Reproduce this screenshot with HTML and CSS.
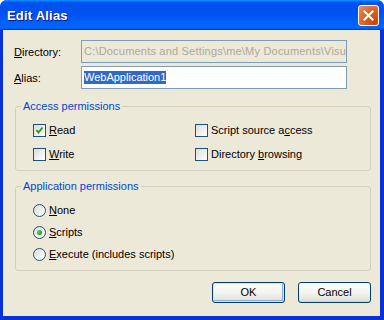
FILE: index.html
```html
<!DOCTYPE html>
<html lang="en">
<head>
  <meta charset="UTF-8">
  <title>Edit Alias</title>
  <link rel="stylesheet" href="styles.css">
</head>
<body>
  <div class="window">
    <div class="titlebar">
      <span class="title">Edit Alias</span>
      <div class="close" title="Close">
        <svg width="11" height="11" viewBox="0 0 11 11">
          <path d="M1.5 1.5 L9.5 9.5 M9.5 1.5 L1.5 9.5" stroke="#ffffff" stroke-width="2" stroke-linecap="square"/>
        </svg>
      </div>
    </div>

    <div class="client">
      <div class="field">
        <label><u>D</u>irectory:</label>
        <div class="textbox readonly">C:\Documents and Settings\me\My Documents\Visu</div>
      </div>
      <div class="field">
        <label><u>A</u>lias:</label>
        <div class="textbox"><span class="selected">WebApplication1</span></div>
      </div>

      <fieldset class="group">
        <legend>Access permissions</legend>
        <div class="checks">
          <div class="option"><span class="checkbox checked"><svg width="11" height="11" viewBox="0 0 11 11"><path d="M2.5 5 L4.5 7.5 L8.5 2.5" fill="none" stroke="#21a121" stroke-width="2"/></svg></span><span><u>R</u>ead</span></div>
          <div class="option"><span class="checkbox"></span><span>Script source a<u>c</u>cess</span></div>
          <div class="option"><span class="checkbox"></span><span><u>W</u>rite</span></div>
          <div class="option"><span class="checkbox"></span><span>Directory <u>b</u>rowsing</span></div>
        </div>
      </fieldset>

      <fieldset class="group app">
        <legend>Application permissions</legend>
        <div class="radios">
          <div class="option"><span class="radio"></span><span><u>N</u>one</span></div>
          <div class="option"><span class="radio on"></span><span><u>S</u>cripts</span></div>
          <div class="option"><span class="radio"></span><span><u>E</u>xecute (includes scripts)</span></div>
        </div>
      </fieldset>

      <div class="buttons">
        <div class="btn default">OK</div>
        <div class="btn">Cancel</div>
      </div>
    </div>
  </div>
</body>
</html>
```

FILE: styles.css
```css
body {
  margin: 0;
  padding: 0;
  font-family: "Liberation Sans", Arial, sans-serif;
  font-size: 11px;
  color: #000000;
}
.window {
  width: 384px;
  height: 320px;
  box-sizing: border-box;
  background-color: #0831d9;
  border-radius: 7px 7px 0 0;
  display: flex;
  flex-direction: column;
  overflow: hidden;
}
.titlebar {
  height: 30px;
  flex: none;
  display: flex;
  align-items: center;
  justify-content: space-between;
  padding: 0 5px 0 7px;
  background: linear-gradient(#0997ff 0, #0053ee 8%, #0050ee 40%, #0066ff 88%, #0066ff 93%, #005bff 95%, #003dd7 96%, #003dd7);
}
.title {
  color: #ffffff;
  font-weight: bold;
  font-size: 13px;
  text-shadow: 1px 1px #0f1089;
  letter-spacing: 0.2px;
}
.close {
  width: 19px;
  height: 19px;
  border: 1px solid #ffffff;
  border-radius: 3px;
  background: radial-gradient(circle at 85% 85%, #cc4600 0, #dc6527 55%, #e98c62 100%);
  display: flex;
  justify-content: center;
  align-items: center;
  margin-top: 1px;
}
.client {
  flex: 1;
  margin: 0 4px 4px 3px;
  background-color: #ece9d8;
  padding: 10px 0 0 0;
}
.field {
  display: flex;
  align-items: center;
  padding-left: 11px;
  margin-bottom: 3px;
}
.field label {
  width: 67px;
}
.textbox {
  width: 266px;
  height: 23px;
  box-sizing: border-box;
  border: 1px solid #7f9db9;
  background-color: #ffffff;
  padding: 0 2px;
  line-height: 21px;
  white-space: nowrap;
  overflow: hidden;
}
.textbox.readonly {
  background-color: #ece9d8;
  color: #aca899;
  letter-spacing: 0.2px;
}
.selected {
  background-color: #316ac5;
  color: #ffffff;
  display: inline-block;
  line-height: 13px;
}
.group {
  margin: 11px 9px 0 12px;
  padding: 11px 0 9px 5px;
  border: 1px solid #d0d0bf;
  border-radius: 3px;
}
.group legend {
  color: #0046d5;
  padding: 0 2px;
  line-height: 13px;
}
.group.app {
  margin-top: 9px;
}
.checks {
  display: grid;
  grid-template-columns: 162px 1fr;
  row-gap: 11px;
  padding-left: 12px;
}
.radios {
  display: flex;
  flex-direction: column;
  gap: 9px;
  padding-left: 12px;
}
.option {
  display: flex;
  align-items: center;
  line-height: 13px;
  height: 13px;
}
.checkbox {
  width: 13px;
  height: 13px;
  box-sizing: border-box;
  border: 1px solid #1c5180;
  background: linear-gradient(135deg, #dcdcd7 0, #f5f5f3 70%, #ffffff 100%);
  margin-right: 3px;
  display: flex;
}
.checkbox svg {
  display: block;
}
.radio {
  width: 13px;
  height: 13px;
  box-sizing: border-box;
  border: 1px solid #1c5180;
  border-radius: 50%;
  background: linear-gradient(135deg, #dcdcd7 0, #f5f5f3 70%, #ffffff 100%);
  margin-right: 3px;
  display: flex;
  justify-content: center;
  align-items: center;
}
.radio.on::after {
  content: "";
  width: 5px;
  height: 5px;
  border-radius: 50%;
  background: radial-gradient(circle at 40% 40%, #5ae05a 0, #21a121 60%, #1a7e1a 100%);
}
.buttons {
  display: flex;
  justify-content: flex-end;
  gap: 13px;
  margin: 11px 9px 0 0;
}
.btn {
  width: 73px;
  height: 21px;
  box-sizing: border-box;
  border: 1px solid #003c74;
  border-radius: 3px;
  background: linear-gradient(#ffffff 0, #f4f4f0 50%, #e3e3db 90%, #d6d0c5 100%);
  text-align: center;
  line-height: 19px;
}
.btn.default {
  box-shadow: inset 0 0 0 1px #cee7ff, inset -1px -1px 0 1px #89ade4;
}
```
